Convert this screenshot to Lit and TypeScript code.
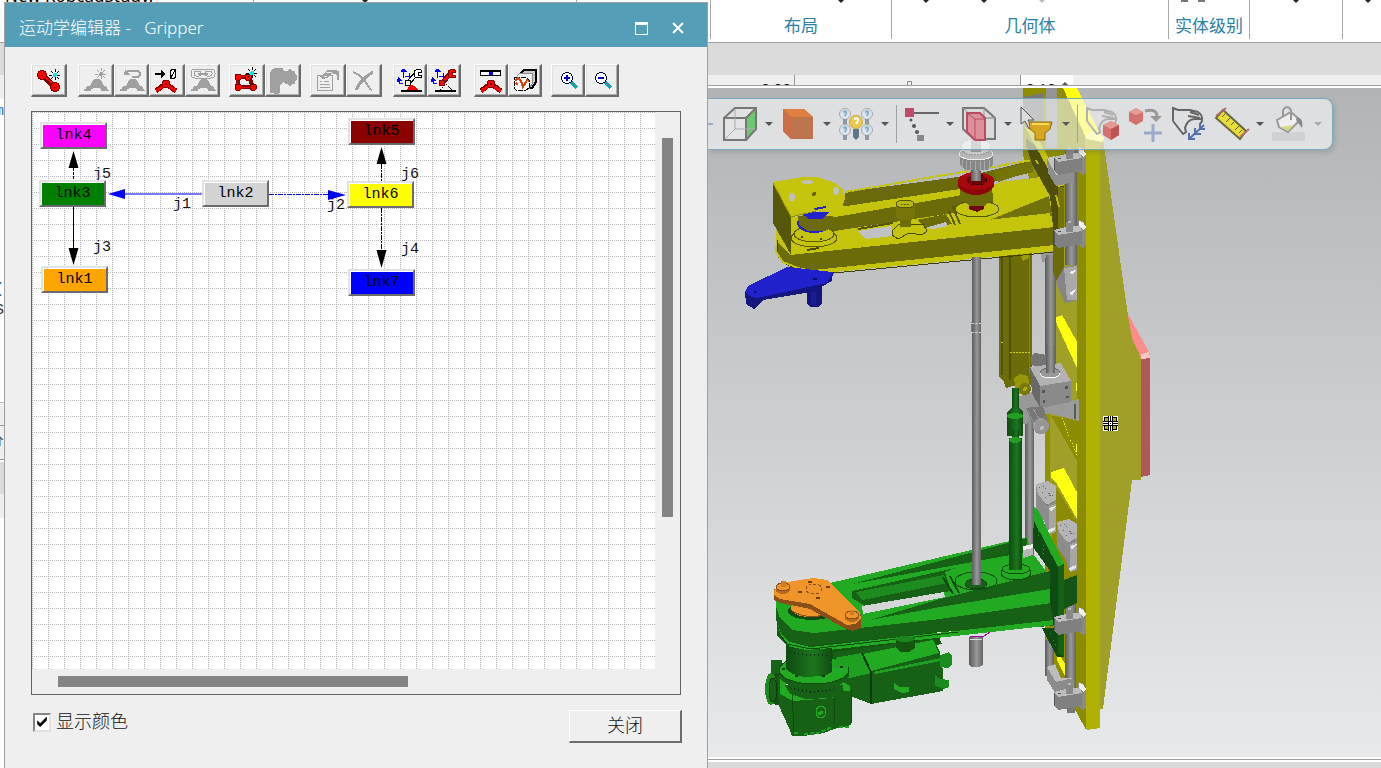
import { LitElement, html, css, svg } from "lit";
import { customElement, state } from "lit/decorators.js";

const star = (x: number, y: number, c: string, core: string) => svg`
  <path d="M${x} ${y - 6}v12M${x - 6} ${y}h12M${x - 4} ${y - 4}l8 8M${x + 4} ${y - 4}l-8 8" stroke=${c} stroke-dasharray="3 1" fill="none"/>
  <circle cx=${x} cy=${y} r="2" fill=${core}/>`;

const greyJoint = svg`<path d="M6 27v-2h2v-2l5-2 1-4 3-2h4l3 2 1 4 4 2v2l2 2h-8v-2l-3-1h-4l-3 1v2z" fill="#a0a0a0"/>`;
const redJoint = svg`
  <path d="M15 21L7 27M19 21l8 6" stroke="#7d0000" stroke-width="5"/>
  <path d="M15 22l-8 5M19 22l8 5" stroke="#f00" stroke-width="3"/>
  <circle cx="17" cy="20" r="4" fill="#f00" stroke="#7d0000"/><circle cx="17" cy="20" r="1" fill="#7d0000"/>`;
const axes = svg`<path d="M10 14V6M8 8l2-3 3 3M12 12h6M16 9v6M6 14v5h4" stroke="#00f" fill="none"/><path d="M7 8h7l-3-4zM5 13l4 4-5 1z" fill="#00f"/>`;

const toolIcons: Record<string, unknown> = {
  link: svg`<path d="M11 11L24 23" stroke="#7d0000" stroke-width="6"/><path d="M12 11l12 11" stroke="#f00" stroke-width="2"/>
    <circle cx="11" cy="11" r="4.500" fill="#f00" stroke="#7d0000"/><circle cx="24" cy="23" r="4.500" fill="#f00" stroke="#7d0000"/>
    <path d="M10 11h2M23 23h2" stroke="#7d0000"/>${star(24, 11, "#000", "#00e5e5")}`,
  joint: svg`${greyJoint}${star(23, 10, "#a0a0a0", "#a0a0a0")}`,
  reverse: svg`${greyJoint}<path d="M13 7h11l2 2v2l-2 2h-6" stroke="#a0a0a0" stroke-width="2" fill="none"/><path d="M10 11h7l-6-5z" fill="#a0a0a0"/>`,
  zero: svg`${redJoint}<path d="M6 10h10" stroke="#000" stroke-width="2" fill="none"/><path d="M12 6l5 4-5 4z"/><ellipse cx="24" cy="10" rx="3" ry="4.500" fill="none" stroke="#000"/><path d="M27 5l-6 10" stroke="#000"/>`,
  chain: svg`${greyJoint}<rect x="6" y="5" width="24" height="9" rx="4" fill="none" stroke="#a0a0a0"/><rect x="9" y="7" width="7" height="5" rx="2" fill="none" stroke="#a0a0a0"/><rect x="20" y="7" width="7" height="5" rx="2" fill="none" stroke="#a0a0a0"/><path d="M13 9.500h10" stroke="#a0a0a0" stroke-width="2"/>`,
  crank: svg`<path d="M9 13h11l4 10H9z" fill="none" stroke="#7d0000" stroke-width="4"/><path d="M9 12h11M8 13v10h16" fill="none" stroke="#f00"/>
    ${[[9, 13], [19, 13], [9, 23], [24, 23]].map(([x, y]) => svg`<rect x=${x - 3} y=${y - 3} width="6" height="6" rx="1" fill="#f00" stroke="#7d0000"/>`)}${star(23, 9, "#000", "#00e5e5")}`,
  frame: svg`<path d="M5 29V9l2-4 4-1h7l1 3h4l1-2h2l1 2h3v3l2 1v5l-2 1v3h-3l-1 2h-2l-1-2h-3l-2-2-3 3v8l-2 1z" fill="#a0a0a0"/>`,
  props: svg`<path d="M7 11h15v15H7zM10 17h2M10 20h10M10 23h10M14 17h5" fill="none" stroke="#a0a0a0"/><path d="M9 12l4-1 4-5h8l4 1v9h-2v-5l-5-2-5 5-4 1z" fill="#a0a0a0"/><path d="M16 8h6M14 12h3" stroke="#eee"/>`,
  remove: svg`<path d="M7 8l6 3 6 6 5 8 2 1" stroke="#a0a0a0" stroke-width="2" fill="none"/><path d="M27 8l-6 4-7 7-4 7" stroke="#a0a0a0" stroke-width="3" fill="none"/>`,
  pose: svg`${axes}<path d="M15 19l8-9" stroke="#000" stroke-width="5"/><path d="M15 19l8-9" stroke="#fff" stroke-width="3"/><path d="M21 7l4-2 3 1v2h-3v3h3v2h-6z" fill="#fff" stroke="#000"/><circle cx="15" cy="19" r="3" fill="#fff" stroke="#000"/><path d="M13 27l4-6 5 1 4 5z" fill="#f00"/><path d="M8 27h21" stroke="#000" stroke-width="2"/>`,
  tool: svg`${axes}<path d="M15 19l8-9" stroke="#7d0000" stroke-width="5"/><path d="M15 19l8-9" stroke="#f00" stroke-width="3"/><path d="M21 7l4-2 3 1v2h-3v3h3v2h-6z" fill="#f00" stroke="#7d0000"/><circle cx="15" cy="19" r="3" fill="#f00" stroke="#7d0000"/><path d="M13 27l3-5M19 20l7 7" stroke="#000" stroke-dasharray="2 1"/><path d="M8 27h21" stroke="#000" stroke-width="2"/>`,
  bar: svg`${redJoint}<rect x="6" y="6" width="21" height="6" fill="#000"/><rect x="7" y="8" width="19" height="3" fill="#fff"/><rect x="15" y="8" width="4" height="3" fill="#00f"/>`,
  cubes: svg`<path d="M12 10l4-4h12v12l-4 6-12 1z" fill="#c8c8c8" stroke="#000" stroke-width="2"/><path d="M9 12l3-3h12v11l-3 5" fill="#eee" stroke="#888"/><path d="M7 13h11l3 3v8l-3 2H8l-2-2v-9z" fill="#fff" stroke="#000" stroke-dasharray="5 1"/><path d="M7 17l3-3 3 3 2 6 4-7 2 1M8 19l2 2" stroke="#d8450a" stroke-width="2" fill="none"/>`,
  zoomin: svg`<path d="M20 18l6 6" stroke="#00aab4" stroke-width="3"/><path d="M21 18l5 5" stroke="#777"/><circle cx="16" cy="14" r="5.500" fill="#fff" stroke="#00003c"/><path d="M13 14h6M16 11v6" stroke="#0000c8" stroke-width="2"/>`,
  zoomout: svg`<path d="M20 18l6 6" stroke="#00aab4" stroke-width="3"/><path d="M21 18l5 5" stroke="#777"/><circle cx="16" cy="14" r="5.500" fill="#fff" stroke="#00003c"/><path d="M13 14h6" stroke="#0000c8" stroke-width="2"/>`,
};

type Tool = { id: string; name: string; off?: boolean };
const toolGroups: { cls: string; tools: Tool[] }[] = [
  { cls: "one", tools: [{ id: "link", name: "新建连杆" }] },
  { cls: "four wide", tools: [{ id: "joint", name: "新建关节", off: true }, { id: "reverse", name: "反转关节", off: true }, { id: "zero", name: "归零" }, { id: "chain", name: "关节依赖", off: true }] },
  { cls: "two", tools: [{ id: "crank", name: "曲柄" }, { id: "frame", name: "基准坐标系", off: true }] },
  { cls: "two", tools: [{ id: "props", name: "属性", off: true }, { id: "remove", name: "删除", off: true }] },
  { cls: "pair wide", tools: [{ id: "pose", name: "姿态" }, { id: "tool", name: "工具坐标系" }] },
  { cls: "pair wider", tools: [{ id: "bar", name: "关节调整" }, { id: "cubes", name: "姿态编辑器" }] },
  { cls: "pair", tools: [{ id: "zoomin", name: "放大" }, { id: "zoomout", name: "缩小" }] },
];

const nodes = [
  { id: "lnk4", x: 8, y: 10, c: "#ff00ff" },
  { id: "lnk3", x: 7, y: 68, c: "#008000" },
  { id: "lnk1", x: 9, y: 154, c: "#ffa500" },
  { id: "lnk2", x: 170, y: 68, c: "#d3d3d3" },
  { id: "lnk5", x: 316, y: 6, c: "#8b0000" },
  { id: "lnk6", x: 315, y: 69, c: "#ffff00" },
  { id: "lnk7", x: 316, y: 157, c: "#0000ff" },
];
const joints = [
  { id: "j5", x: 61, y: 66 }, { id: "j3", x: 61, y: 139 }, { id: "j1", x: 141, y: 96 },
  { id: "j2", x: 295, y: 97 }, { id: "j6", x: 369, y: 66 }, { id: "j4", x: 369, y: 141 },
];

const down = (xs: number[], c = "#222") => svg`${xs.map((x) => svg`<path d="M${x - 3} 0h6l-3 3z" fill=${c}/>`)}`;

/* Small drive housing with a row of fixing holes. */
const housing = (x: number, y: number) => svg`
  <path d="M${x} ${y}l8-1 12 4v44l-8 1-4-11-8-12z" fill="#8c8c8c"/>
  <path d="M${x + 13} ${y + 22}l7-2v28l-7 2z" fill="#a6a6a6"/>
  <path d="M${x} ${y}l12-3 8 5v14l-9 5-9-11z" fill="#b5b5b5"/>
  <path d="M${x + 3} ${y + 3}l8 13M${x + 7} ${y + 2}l8 10M${x + 13} ${y + 12}l5-1M${x + 11} ${y + 21}l8-4" stroke="#666" stroke-dasharray="1 2"/>
  <path d="M${x + 13} ${y + 24}l7-2-5 6zM${x + 12} ${y + 46}l7-3v3l-6 3z" fill="#e6e6e6"/>`;

const clamp = (x: number, y: number) => svg`
  <path d="M${x + 24} ${y - 6}l6 2 2 6v18l-3 2-5-4z" fill="#8a8a8a"/>
  <path d="M${x + 25} ${y - 5}l4 1 3 5-2 3-5-4z" fill="#f0f0f0"/>
  <path d="M${x} ${y + 5}l4 4 24-4v13l-24 4-4-4z" fill="#808080"/>
  <path d="M${x} ${y + 4}l12-3 14-1 2 5-24 4z" fill="#bdbdbd"/>
  <path d="M${x + 4} ${y + 5}h3M${x} ${y + 5}v12" stroke="#555"/>
  <rect x=${x + 12} y=${y - 4} width="7" height="10" fill="#888"/><rect x=${x + 14} y=${y - 5} width="3" height="2" fill="#b8b8b8"/>`;

const model = svg`
<defs>
  <linearGradient id="rod"><stop offset="0" stop-color="#5a5a5a"/><stop offset=".55" stop-color="#999"/><stop offset="1" stop-color="#626262"/></linearGradient>
  <linearGradient id="gcyl"><stop offset="0" stop-color="#0f4a12"/><stop offset=".6" stop-color="#1c761e"/><stop offset="1" stop-color="#104b12"/></linearGradient>
  <linearGradient id="ycyl"><stop offset="0" stop-color="#56560a"/><stop offset=".5" stop-color="#7d7d0c"/><stop offset="1" stop-color="#5d5d08"/></linearGradient>
</defs>
<!-- column -->
<path d="M1127 312l23 42-1 6-8-1-9-12z" fill="#ff8c8c"/>
<path d="M1141 356h9v119l-9 2z" fill="#b05858"/><path d="M1141 354l8-2 1 6-9 1z" fill="#ffc4c4"/>
<path d="M1130 334l11 24h-11z" fill="#ffff10"/>
<path d="M1023 88h40l23 49v590l-9-15-32-55V240l-22-85z" fill="#8e8e00"/>
<path d="M1045 240h10v410l-10-12z" fill="#929200"/>
<path d="M1050 247h30v350h-30z" fill="#a0a028"/>
<path d="M1081 160h5v400h-5z" fill="#8a8a00"/>
<path d="M1057 300l20 10 4 40-26-35z" fill="#a0a028"/>
<path d="M1051 416l30 52v-90l-8 40z" fill="#8c8c00"/>
<path d="M1054 318l8-3 19 34v28z" fill="#ffff10"/>
<path d="M1051 472l13-4 16 30 1 28-24-42-6-6z" fill="#ffff10"/>
<path d="M1052 480l27 45v120h-27z" fill="#8b8b05"/>
<path d="M1045 560h20v98l12 15v40l-12-18-20-34z" fill="#8e8e00"/><path d="M1057 650l8 14v12l-8-16z" fill="#ffff10"/>
<ellipse cx="1078" cy="387" rx="2" ry="6" fill="#ffff10"/><ellipse cx="1078" cy="448" rx="2" ry="6" fill="#ffff10"/>
<path d="M1062 418l19 48" stroke="#ff0" stroke-dasharray="1 2"/>
<path d="M1063 88h14l25 50h-16z" fill="#ffff10"/>
<path d="M1098 136l5 2 25 178 4 22 9 20v122h-9l-29 229h-5z" fill="#a0a028"/>
<path d="M1085 137h15v591l-13 2-1-3z" fill="#b0b005"/>
<path d="M1086 134l11-3 7 7-2 4-16-3z" fill="#ffff70"/>
<path d="M1077 170h9v560l-9-17z" fill="#8c8c00"/>
<!-- rails behind -->
<rect x="1046" y="88" width="11" height="60" fill="#949494"/><path d="M1023 97l20-4v35h-18z" fill="#777"/>
<rect x="1065" y="150" width="12" height="115" fill="url(#rod)"/>
<rect x="1025" y="420" width="9" height="135" fill="url(#rod)"/>
<rect x="1045" y="640" width="9" height="36" fill="url(#rod)"/>
<rect x="1065" y="600" width="11" height="100" fill="url(#rod)"/>
<!-- upper cylinder -->
<path d="M999 250h33v135h-15l-11 3-2-6-5-5z" fill="#6c6c08"/><path d="M1002 250v125M1010 250v130" stroke="#525206" stroke-width="2"/><path d="M1029 255v118" stroke="#858510"/>
<path d="M1010 352h20M1001 342h3" stroke="#d0d010" stroke-dasharray="2 1"/><path d="M1018 250l10-1 1 9-6 3z" fill="#9d9d0b"/>
<rect x="1045" y="247" width="11" height="130" fill="url(#rod)"/><path d="M1040 250h16v5h-10l-1 7h-3z" fill="#9a9a9a"/>
<!-- upper arm -->
<path d="M776 230v19l6 11 18 10 23 3 232-22v-8l-30-60z" fill="#c4c40a"/>
<path d="M830 202l145-20 10 20-155 22z" fill="#c4c40a"/>
<path d="M845 192l128-17 60-15v12l-60 15-130 20z" fill="#6a6a0a"/>
<path d="M845 192l188-32" stroke="#c4c40a" stroke-width="2" stroke-dasharray="6 1"/>
<path d="M840 207l200-30 16 28-1 24-265 27V218z" fill="#c4c40a"/>
<path d="M993 171l40-10v10l-35 11z" fill="#747408"/><path d="M1000 182l34-4 13 18-64 22z" fill="#c4c40a"/>
<path d="M977 225l72-29 3 20-90 11z" fill="#72720a"/><path d="M970 222l80-9 3 15-80 9z" fill="#c4c40a"/>
<path d="M824 219l144-25 25-1v14l-165 25z" fill="#6b6b0a"/>
<path d="M790 255l265-28v18l-242 25-21-4-14-8-1-16z" fill="#6b6b0a"/>
<path d="M777 240v13l7 10 19 9 20 2 232-22" fill="none" stroke="#3f3f05"/><path d="M776 246v6l7 10 20 8 20 2 232-23" fill="none" stroke="#c4c40a" stroke-width="2"/>
<path d="M858 231l33-5 2 10-28 3z" fill="#c0c1c3"/><path d="M917 220l29-6 6 10-27 4z" fill="#6b6b0a"/><path d="M925 228l21-6 2 4-15 3z" fill="#c0c1c3"/>
<path d="M858 229l35-6" stroke="#55550a" stroke-width="2"/>
<path d="M952 205l8 19M948 209l7 16" stroke="#5c5c08" stroke-width="2"/>
<ellipse cx="814" cy="238" rx="23" ry="9" fill="none" stroke="#5b5b08"/><ellipse cx="814" cy="234" rx="20" ry="8" fill="#c4c40a" stroke="#5b5b08"/>
<ellipse cx="814" cy="223" rx="17" ry="10" fill="#2222cc"/><path d="M798 216h35v11l-8 4h-17l-9-6z" fill="#6b6b0a"/><path d="M801 212h28l-6 7h-14z" fill="#2222cc"/>
<path d="M773 183l18 34v38l-18-32z" fill="#57570a"/>
<path d="M773 182l30-5 15 0 17 6 9 7 1 9-5 8-12 5-12-1-25 6z" fill="#c4c40a"/>
<path d="M773 183l18 34 25-6" stroke="#8c8c08" fill="none"/>
<ellipse cx="807" cy="182" rx="6" ry="2" fill="#c0c0b0"/><ellipse cx="792" cy="197" rx="3" ry="4" fill="#c0c0c0"/><ellipse cx="836" cy="191" rx="3" ry="4" fill="#c0c0c0"/><circle cx="814" cy="194" r="2" fill="#67670a"/><path d="M814 208l12-2v2l-11 2z" fill="#2222cc"/>
<path d="M801 237h2M820 239h2M807 250l12-2" stroke="#494906" stroke-width="2"/>
<path d="M892 231l7-7h24l4 7-5 4-13-2-11 6-6-4z" fill="#c4c40a" stroke="#4c4c06"/>
<path d="M900 208h11v19h-11z" fill="#6d6d0a"/><path d="M896 203h19v14l-4 3h-11l-4-3z" fill="#75750a"/><ellipse cx="905" cy="204" rx="9" ry="4" fill="#b9b90a" stroke="#555506"/><path d="M901 204h8" stroke="#5b5b06" stroke-dasharray="2 1"/>
<ellipse cx="977" cy="209" rx="22" ry="8" fill="#c4c40a" stroke="#55550a"/>
<path d="M969 200h15v9l-7 3-8-3z" fill="#6d0508"/><path d="M960 183h32v15l-8 8h-15l-9-9z" fill="#6b6b0a"/>
<ellipse cx="976" cy="184" rx="18" ry="11" fill="#8c060a"/><ellipse cx="976" cy="181" rx="18" ry="9" fill="#a6080e"/><ellipse cx="977" cy="180" rx="10" ry="5" fill="#6c0508" stroke="#3c0505" stroke-dasharray="3 2"/>
<rect x="971" y="138" width="10" height="43" fill="url(#rod)"/><path d="M960 155h33v10l-6 5h-21l-6-5z" fill="#888"/><path d="M962 160v8M966 161v9M970 161v10M975 161v10M980 161v10M984 161v9M989 160v8" stroke="#aaa"/><ellipse cx="976" cy="154" rx="17" ry="6" fill="#b9b9b9" stroke="#eee"/><ellipse cx="976" cy="147" rx="15" ry="8" fill="#d9d9d9" stroke="#999" stroke-dasharray="2 1"/><path d="M971 138h10v14h-10z" fill="#a4a4a4"/>
<path d="M1026 138l17 14 21 35v92l-6-2-5-16v-34l-3-31-17-30-7-20z" fill="#4e4e08"/><path d="M1025 127l8 3 31 55-6 2z" fill="#c4c40a"/><path d="M1058 187h6v92l-6-6z" fill="#73730a"/>
<path d="M1053 246h11v35l-8-1-3-8z" fill="#6b6b0a"/><path d="M1036 160l2 4M1056 195l3 12" stroke="#bcbc0a" stroke-width="2"/>
<!-- upper guide clamps -->
<path d="M1047 158l8-2 5 14 14 2v10l-18 4-8-13z" fill="#8f8f8f"/><path d="M1047 158l8-2 5 14 14 1-18 4z" fill="#c4c4c4"/>
${clamp(1054, 153)}${clamp(1054, 226)}
<path d="M1056 282l8-15 13-2v35l-12 3z" fill="#858585"/><path d="M1064 268l13-2v34h-10z" fill="#aaa"/><path d="M1069 272l7-2-4 5zM1069 293l7-4-4 7z" fill="#f4f4f4"/>
<!-- blue finger -->
<path d="M807 284h15v20l-4 3h-8l-3-3z" fill="#15157e"/><path d="M811 284h5v21h-5z" fill="#1c1c96"/>
<path d="M745 292l2-4 40-21 46 5-1 9-9 5-6 5-54 9-9 9-8-5z" fill="#15157e"/>
<path d="M745 292l3-6 39-19 46 5-6 11-70 15-8-2z" fill="#2222cc"/><path d="M754 292h2M813 279h4" stroke="#0d0d58" stroke-width="2"/>
<!-- centre rod -->
<rect x="972" y="257" width="9" height="330" fill="url(#rod)"/><rect x="971" y="322" width="10" height="11" fill="#828282"/><path d="M971 323h2M979 323h2M971 332h9" stroke="#e8e8e8" stroke-dasharray="3 1"/>
<!-- gearbox -->
<path d="M1031 356l4-3 12 2v14l-8 3-8-8z" fill="#747474"/>
<path d="M1014 398l19-6 7 13 15-7 24 5v18l-27-7-17 0-8 10h-8v-12z" fill="#989898"/>
<path d="M1042 409l37-10v22l-22-6z" fill="#9b9b9b"/><path d="M1075 404v15" stroke="#5a5a5a" stroke-width="2"/>
<path d="M1030 367l31-4 10 19v20l-31 6-7-15z" fill="#8a8a8a"/><path d="M1030 367l31-4 10 18-31 5z" fill="#b3b3b3"/><path d="M1030 367l10 19v22l-8-15z" fill="#696969"/>
<path d="M1042 390h3v3h-3zM1065 386h3v3h-3zM1043 400h2v3h-2zM1066 396h3v2h-3z" fill="#555"/>
<ellipse cx="1050" cy="373" rx="10" ry="5" fill="#999" stroke="#666"/><path d="M1040 373a10 5 0 0 0 20 0" stroke="#fff" fill="none"/><rect x="1046" y="345" width="9" height="28" fill="url(#rod)"/>
<path d="M1026 408l17-2 6 19-13 8z" fill="#777"/><ellipse cx="1041" cy="426" rx="8" ry="8" fill="#969696"/><circle cx="1042" cy="428" r="2" fill="#bbb"/>
<path d="M1028 411l8 16M1033 409l8 12" stroke="#aaa" stroke-dasharray="1 1"/>
<path d="M1014 378l6-4 8 2 3 15-7 4-8-2z" fill="#96960a"/><ellipse cx="1025" cy="389" rx="6" ry="6" fill="#77770a"/><circle cx="1025" cy="389" r="2" fill="#adad10"/>
<!-- green cylinder -->
<rect x="1012" y="388" width="7" height="25" fill="url(#gcyl)"/><path d="M1008 411l4-3h7l4 3v25h-16v-22z" fill="url(#gcyl)"/><ellipse cx="1015" cy="416" rx="8" ry="3" fill="#239f25"/><rect x="1012" y="430" width="7" height="12" fill="url(#gcyl)"/>
<!-- drive housings -->
${housing(1036, 484)}${housing(1057, 522)}
<!-- lower arm -->
<path d="M776 600l6-12 48-5 20 18-18 40h-40l-15-7z" fill="#22aa22"/>
<path d="M830 583l197-46 4 14 26 35-5 30-214 22-50-5-11-8v-18z" fill="#22aa22"/>
<path d="M852 584l175-46v14l-175 32z" fill="#176117"/><path d="M852 598l0-7 103-23-10 4 6 19-86 15z" fill="#176117"/><path d="M856 592l88-17 3 8-85 17z" fill="#1d8b1f"/>
<path d="M862 606l82-14 1 5-82 17z" fill="#d5d6d8"/><path d="M943 577l10 17M950 576l9 17" stroke="#0f4a12" stroke-width="2"/>
<path d="M870 620l70-21 110-28v18l-110 18-70 13z" fill="#176117"/>
<path d="M786 642l100-8 50-4 6 14-110 16-46 2z" fill="#14560f"/>
<path d="M776 606l4 12 12 12 22 3 126-14 118-17v18l-5 6-113 6-131 14-23-2-9-8z" fill="#176117"/>
<path d="M777 621l4 13 9 8 20 5 245-27v5l-245 27-20-5-9-10z" fill="#22aa22"/><path d="M778 632l9 12 24 5 147-17" stroke="#104b12" fill="none"/>
<ellipse cx="976" cy="581" rx="21" ry="9" fill="none" stroke="#12500f"/><ellipse cx="976" cy="584" rx="11" ry="5" fill="#176117" stroke="#0b390d" stroke-dasharray="3 1"/><rect x="972" y="555" width="9" height="30" fill="#888"/><rect x="972" y="257" width="9" height="328" fill="url(#rod)"/><path d="M971 323h10M971 332h10" stroke="#ccc" stroke-dasharray="3 1"/>
<ellipse cx="1016" cy="573" rx="15" ry="7" fill="#22aa22" stroke="#104b12"/><ellipse cx="1016" cy="569" rx="14" ry="5" fill="#22aa22" stroke="#104b12"/><rect x="1009" y="438" width="13" height="132" fill="url(#gcyl)"/><ellipse cx="1015" cy="440" rx="6" ry="3" fill="#239f25"/>
<path d="M1023 546l10-2v11l-10 3z" fill="#b5b5b5"/><path d="M1023 546l10-2v4l-10 2z" fill="#f0f0f0"/>
<path d="M1034 509l30 56v92h-7l-15-29h12l-4-28v-29l-17-24z" fill="#0f4a12"/><path d="M1034 507l4 3 26 54-6 3-25-48z" fill="#22aa22"/><path d="M1058 566h6v91l-6-4z" fill="#176117"/><path d="M1064 580l13-5v28l-13 6z" fill="#145414"/>
<path d="M1038 527v12M1043 545v12M1050 633l8 17" stroke="#22aa22" stroke-dasharray="1 3"/>
<path d="M969 637h14v28l-4 2h-7l-3-2z" fill="url(#rod)"/><path d="M970 636h14l6-4" stroke="#a000a0" fill="none"/><path d="M970 639h12" stroke="#ddd"/>
<!-- lower drive -->
<path d="M834 652l90-12 10-1 6 13 3 19v20l-72 13-18-7-23-1z" fill="#176117"/><path d="M862 654l71-14 6 13-68 18z" fill="#22aa22"/><path d="M834 658l28-5 9 20-34 8z" fill="#1fa020"/><path d="M862 653l9 19v32" stroke="#0c3b0e" stroke-width="2" fill="none"/><path d="M873 672l68-14v3l-66 13z" fill="#1fa020"/>
<path d="M940 655l9-3 3 4v8l-4 4-8-1z" fill="#1a8b1c"/><path d="M935 675l5 4 9 1v7l-5 2-9-3z" fill="#1a8b1c"/><path d="M894 683l6 4h9v5l-7 1-8-4z" fill="#22aa22"/><path d="M896 639h19v9l-6 4h-8l-5-4z" fill="#14560f"/><ellipse cx="905" cy="639" rx="10" ry="3" fill="#1b861d"/>
<path d="M771 660h11v15h-11z" fill="#17631a"/><ellipse cx="777" cy="689" rx="8" ry="16" fill="#145014"/><ellipse cx="771" cy="689" rx="6" ry="16" fill="#1c8a1e"/><ellipse cx="773" cy="690" rx="4" ry="12" fill="#176117" stroke="#0c3b0e"/>
<path d="M777 675l15 17 59-9v42l-17 4-10 4-20 3-12 0-3-8-10-22z" fill="#176117"/><path d="M780 676l15 20 39-2 6-14 10 6v5l-12-1-5 8-40 3-13-7z" fill="#22aa22"/>
<path d="M792 690l2 43M851 690v33M834 698v25" stroke="#0f4a12"/><ellipse cx="821" cy="712" rx="5" ry="6" fill="#176117" stroke="#22aa22"/><path d="M818 714l5-2" stroke="#22aa22" stroke-width="3"/><path d="M794 733h4M804 734l14-1 14-6M839 727h10" stroke="#1fa020" stroke-width="2" stroke-dasharray="4 2" fill="none"/>
<path d="M785 685h58v8l-12 5-25 1-16-5z" fill="#176117"/><ellipse cx="814" cy="675" rx="35" ry="14" fill="#176117"/><ellipse cx="814" cy="670" rx="35" ry="14" fill="#22aa22" stroke="#104b12"/>
<path d="M786 646l20 4 26-2v24l-8 4-20 1-11-3-7-5z" fill="url(#gcyl)"/><path d="M790 652l16 3h22M790 688l20 4 24-2" stroke="#0b360d" stroke-dasharray="1 3" stroke-width="2" fill="none"/><path d="M831 662l8-4 23-3-16 13h-12z" fill="#1fa020"/>
<path d="M782 669h3M795 676h3M822 676h3M840 667h3" stroke="#0c3b0e" stroke-width="2"/>
<!-- orange finger -->
<ellipse cx="812" cy="611" rx="24" ry="9" fill="#0f4a12"/><ellipse cx="810" cy="608" rx="19" ry="9" fill="#f0952a"/><path d="M792 611q17 10 38 2" stroke="#8a4f18" fill="none"/>
<path d="M774 589v11l6 3 30 6 36 20 7 2 8-3v-13l-6-6z" fill="#8a4f18"/><path d="M774 590l7-7 32-5 14 2 33 32 1 7-6 5-8 1-37-21-30-5-6-4z" fill="#f0952a"/>
<ellipse cx="814" cy="589" rx="8" ry="5" fill="none" stroke="#8a4f18" stroke-dasharray="3 2"/><path d="M808 582h4M826 587h4M798 592h4M816 598h4" stroke="#6d3c10" stroke-width="2"/>
<ellipse cx="783" cy="590" rx="7" ry="4" fill="#b66a1c"/><ellipse cx="783" cy="587" rx="7" ry="4" fill="#f0952a" stroke="#8a4f18"/><rect x="781" y="581" width="5" height="6" fill="#ce7d20"/>
<ellipse cx="852" cy="618" rx="7" ry="4" fill="#b66a1c"/><ellipse cx="852" cy="615" rx="7" ry="4" fill="#f0952a" stroke="#8a4f18"/><rect x="850" y="610" width="4" height="5" fill="#ce7d20"/>
<!-- lower guide clamps -->
<path d="M1047 668l8-3 5 14 14 1v10l-18 4-9-14z" fill="#8b8b8b"/><path d="M1047 667l8-3 6 14 13 0-18 4z" fill="#bcbcbc"/>
${clamp(1054, 613)}${clamp(1054, 688)}<rect x="1067" y="708" width="8" height="5" fill="#777"/>
<!-- pick cursor -->
<path d="M1103 416h15v15h-15z" fill="#fff"/><path d="M1104 417h13v13h-13z"/><path d="M1105 418h11v11h-11z" fill="#a8a82a"/>
<path d="M1108 416h5v15h-5zM1103 421h15v5h-15z"/><path d="M1109 416h3v15h-3zM1103 422h15v3h-15z" fill="#fff"/><path d="M1110 416h1v15h-1zM1103 423h15v1h-15z"/><path d="M1108 421h5v5h-5z"/><path d="M1109 422h3v3h-3z" fill="#fff"/><path d="M1110 423h1v1h-1z"/>`;

const hand = (c: string) => svg`<path d="M3 16V3l5 2h12l8 2q5 3 4 9l-2 3M3 16l10 13 3-2-1-4q2-8 9-9h8M20 7l9 3M18 11l12 2" fill="none" stroke=${c} stroke-width="2"/>`;

const viewIcons: Record<string, unknown> = {
  wire: svg`<path d="M4 13l11-10h21v21l-10 11H4z" fill="#e8e8e8" fill-opacity=".5"/><path d="M26 13L36 4v20L26 34z" fill="#6cc870"/><path d="M4 13h22v22H4zM4 13L15 3h21v21L26 35M26 13L36 3" fill="none" stroke="#777" stroke-width="2"/><path d="M15 4v20h20M15 24L5 34" stroke="#aaa" fill="none"/>`,
  solid: svg`<path d="M5 4h21l9 8v22H13L5 26z" fill="#bd7550"/><path d="M5 4h21l9 8H13z" fill="#e07f42"/><path d="M5 4l8 8v22l-8-8z" fill="#cf6c48"/>`,
  bulbs: svg`${[[9, 9], [31, 9], [9, 25], [31, 25]].map(([x, y]) => svg`<circle cx=${x} cy=${y} r="5.500" fill="#dde3e8" stroke="#aaa"/><path d="M${x - 2} ${y - 2}q4-2 3 1l-1 3" stroke="#7fb0cc" fill="none" stroke-width="2"/><path d="M${x - 2} ${y + 5}h4v5h-4z" fill="#8d9aa5"/>`)}<circle cx="20" cy="17" r="6.500" fill="#edc94b" stroke="#c7a743"/><path d="M18 14q5-2 4 2l-2 3" stroke="#fff" fill="none" stroke-width="2"/><path d="M17 24h6v8l-3 3-3-3z" fill="#5d7689"/>`,
  path: svg`<rect x="4" y="3" width="9" height="9" fill="#c04b68"/><path d="M13 8h25" stroke="#666" stroke-width="2"/><g fill="#555"><circle cx="10" cy="15" r="1.500"/><circle cx="13" cy="21" r="2"/><circle cx="16" cy="27" r="2"/><rect x="16" y="30" width="7" height="6" fill="#888"/></g>`,
  section: svg`<path d="M4 3h21l11 10v21H15L4 24z" fill="#dadada" stroke="#777" stroke-width="2"/><path d="M25 3v10h11M15 13v21M4 3l11 10h21" fill="none" stroke="#999"/><path d="M8 8h13l5 5v22H16l-8-8z" fill="#dd909a" stroke="#b84c62" stroke-width="2"/><path d="M8 8l8 6h10M16 14v20" stroke="#b84c62" fill="none"/>`,
  filter: svg`<path d="M4 2v17l4-3 4 8 3-2-4-7h6z" fill="#ddd" stroke="#555"/><path d="M12 17h23l-2 7-5 4v7H18v-7l-5-4z" fill="#d9a622" stroke="#87700a"/><path d="M15 19h17" stroke="#f9d65c" stroke-width="2"/>`,
  handcube: svg`${hand("#b0b0b0")}<path d="M19 20l8-4 8 4v10l-8 5-8-5z" fill="#d5706c"/><path d="M19 20l8-4 8 4-8 4z" fill="#e49a94"/><path d="M27 24l8-4v10l-8 5z" fill="#c25353"/>`,
  move: svg`<path d="M2 7l7-4 7 4v9l-7 4-7-4z" fill="#d2716e"/><path d="M2 7l7-4 7 4-7 3z" fill="#e59e98"/><path d="M18 6q13-3 12 7" fill="none" stroke="#999" stroke-width="3"/><path d="M23 11h12l-6 6z" fill="#999"/><path d="M17 28h18M26 19v18" stroke="#9daaca" stroke-width="3"/>`,
  handaxis: svg`${hand("#666")}<path d="M19 34L34 20M19 28v6h6M25 23v6h6M30 18v6h5" stroke="#5470aa" stroke-width="2" fill="none"/>`,
  ruler: svg`<path d="M5 13l7-8 23 21-6 8z" fill="#e8df33" stroke="#6a6a40" stroke-width="2"/><path d="M14 9l-3 3M19 13l-4 4M23 17l-3 3M28 21l-4 4M31 25l-3 3" stroke="#55553a"/><path d="M5 11L15 3M29 32l9-8" stroke="#b36d6d" stroke-width="2"/>`,
  bucket: svg`<path d="M3 27h33v9H3z" fill="#cfd1d2"/><path d="M8 15l14-8 9 8-12 12-9-5z" fill="#eee" stroke="#999" stroke-width="2"/><path d="M14 12V5q4-6 8 0v10" fill="none" stroke="#999" stroke-width="2"/><path d="M28 12q7 2 5 11l-6-8" fill="#888"/><path d="M11 22l8 4 6-6z" fill="#d7d78a"/>`,
};
type ViewTool = { id: string; name: string; menu?: boolean };
const viewGroups: ViewTool[][] = [
  [{ id: "wire", name: "视图方向", menu: true }, { id: "solid", name: "显示样式", menu: true }, { id: "bulbs", name: "显示隐藏", menu: true }],
  [{ id: "path", name: "路径", menu: true }, { id: "section", name: "剖切", menu: true }, { id: "filter", name: "选择过滤", menu: true }],
  [{ id: "handcube", name: "放置" }, { id: "move", name: "重定位" }, { id: "handaxis", name: "操控" }, { id: "ruler", name: "测量", menu: true }, { id: "bucket", name: "颜色", menu: true }],
];

@customElement("view-toolbar")
export class ViewToolbar extends LitElement {
  static styles = css`
    :host { display: block; }
    .bar { display: flex; align-items: center; height: 52px; padding: 0 5px 0 0; width: max-content; box-sizing: border-box;
      background: rgba(250, 251, 253, 0.6); border: 1px solid #79a9bd; border-left: 0; border-radius: 0 9px 9px 0; box-shadow: 2px 3px 4px rgba(80, 80, 80, 0.2); }
    .grip { width: 5px; height: 2px; margin-right: 7px; background: #9daaca; }
    .group { display: flex; align-items: center; }
    .group + .group { margin-left: 2px; border-left: 1px solid #a3a3a3; padding-left: 4px; }
    button { border: 0; background: none; padding: 0; height: 38px; display: block; }
    .icon { width: 40px; }
    .plain { width: 43px; }
    .menu { width: 18px; }
    svg { display: block; margin: auto; }
  `;
  render() {
    return html`<div class="bar" role="toolbar"><div class="grip"></div>${viewGroups.map((g) => html`<div class="group">${g.map((t) => html`
      <button class=${t.menu ? "icon" : "plain"} aria-label=${t.name}><svg width="40" height="38" viewBox="0 0 40 38">${viewIcons[t.id]}</svg></button>
      ${t.menu ? html`<button class="menu" aria-label="${t.name}菜单"><svg width="8" height="5" viewBox="0 0 8 5"><path d="M0 0h8L4 4z" fill=${t.id === "bucket" ? "#aaa" : "#555"}/></svg></button>` : ""}`)}</div>`)}</div>`;
  }
}

@customElement("kinematics-editor")
export class KinematicsEditor extends LitElement {
  @state() private colours = true;

  static styles = css`
    :host { display: flex; flex-direction: column; box-sizing: border-box; border: 1px solid #a0a0a0; border-bottom: 0; background: #efefef; font-family: "Liberation Serif", "Noto Sans CJK SC", serif; }
    button { font: inherit; color: inherit; padding: 0; }
    .title { display: flex; align-items: center; height: 44px; padding: 6px 14px 0 14px; box-sizing: border-box; background: #559eb8; color: #fff; font: 17px/24px "Noto Sans", "Noto Sans CJK SC", sans-serif; }
    h1 { flex: 1; margin: 0; font: inherit; font-weight: 300; white-space: pre; }
    .caption { width: 30px; height: 30px; margin-left: 7px; border: 0; background: none; }
    .caption svg { display: block; margin: auto; }
    .tools { display: flex; gap: 9px; padding: 17px 26px 14px; }
    .set { display: flex; height: 33px; }
    .wide { margin-left: 2px; }
    .wider { margin-left: 4px; }
    .one { width: 36px; } .four { width: 142px; } .two { width: 72px; } .pair { width: 68px; }
    .tool { flex: 1; min-width: 0; box-sizing: border-box; background: #efefef; border: 1px solid #fff; border-right: 2px solid #6b6b6b; border-bottom: 2px solid #6b6b6b; box-shadow: inset 1px 1px #e0e0e0, inset -1px -1px #b0b0b0; overflow: hidden; }
    .tool svg { display: block; margin: -1px 0 0 -1px; }
    .frame { margin: 0 26px; border: 1px solid #646464; display: grid; grid-template-columns: 1fr 25px; grid-template-rows: 557px 25px; }
    .canvas { position: relative; overflow: hidden; background: #fff; }
    .canvas svg { display: block; position: absolute; }
    .node { position: absolute; width: 67px; height: 27px; box-sizing: border-box; border: 2px solid #e3e3e3; border-right-color: #6b6b6b; border-bottom-color: #6b6b6b; box-shadow: inset 1px 1px #fff; font: 15px/20px "Liberation Mono", monospace; color: #000; }
    .joint { font: 15px "Liberation Mono", monospace; fill: #111; }
    .vtrack { padding: 26px 7px 0; }
    .vthumb { height: 379px; background: #848484; }
    .htrack { padding: 7px 26px 0; }
    .hthumb { width: 350px; height: 11px; background: #848484; }
    .foot { display: flex; justify-content: space-between; align-items: flex-start; padding: 15px 25px 0 28px; font-size: 18px; font-weight: 300; color: #111; }
    label { display: flex; align-items: center; gap: 5px; line-height: 24px; }
    input { appearance: none; width: 18px; height: 19px; margin: 0; background: #fff; border: 2px solid #848484; border-right-color: #e2e2e2; border-bottom-color: #e2e2e2; display: grid; place-items: center; }
    input:checked::before { content: ""; width: 12px; height: 12px; background: #000; clip-path: polygon(10% 35%, 35% 60%, 90% 5%, 90% 38%, 35% 92%, 10% 68%); }
    .close { width: 113px; height: 33px; background: #efefef; border: 1px solid #fff; border-right: 2px solid #6b6b6b; border-bottom: 2px solid #6b6b6b; line-height: 26px; }
  `;

  render() {
    return html`
      <header class="title">
        <h1>运动学编辑器 -   Gripper</h1>
        <button class="caption" aria-label="最大化"><svg width="13" height="13"><path d="M.5 .5h12v12H.5z" fill="none" stroke="#fff"/><path d="M0 0h13v3H0z" fill="#fff"/></svg></button>
        <button class="caption" aria-label="关闭窗口"><svg width="12" height="12"><path d="M1 1l10 10M11 1L1 11" stroke="#fff" stroke-width="2"/></svg></button>
      </header>
      <div class="tools" role="toolbar">${toolGroups.map((g) => html`<div class="set ${g.cls}">${g.tools.map((t) => html`
        <button class="tool" aria-label=${t.name} ?disabled=${!!t.off}><svg width="36" height="33" viewBox="0 0 36 33" shape-rendering="crispEdges">${toolIcons[t.id]}</svg></button>`)}</div>`)}
      </div>
      <div class="frame">
        <div class="canvas">
          <svg width="100%" height="100%">
            <defs><pattern id="grid" width="16" height="16" patternUnits="userSpaceOnUse"><path d="M0 .5h16M.5 0v16" stroke="#b4b4b4" stroke-dasharray="1 1" shape-rendering="crispEdges"/></pattern></defs>
            <rect width="100%" height="100%" fill="url(#grid)"/>
            <path d="M41.500 56v12" stroke="#000" stroke-dasharray="3 1"/><path d="M41.500 39l5 17h-10z"/>
            <path d="M41.500 95v42" stroke="#000"/><path d="M41.500 153l5-17h-10z"/>
            <path d="M93 82h77" stroke="#7878ff" stroke-width="2"/><path d="M76 82l17-5v10z" fill="#00f"/>
            <path d="M237 82.500h59" stroke="#00f" stroke-dasharray="5 1 2 1"/><path d="M314 83l-18-5v10z" fill="#00f"/>
            <path d="M349.500 52v17" stroke="#000" stroke-dasharray="5 1 2 1"/><path d="M349.500 35l5 17h-10z"/>
            <path d="M349.500 96v42" stroke="#000" stroke-dasharray="5 1 2 1"/><path d="M349.500 156l5-18h-10z"/>
            ${joints.map((j) => svg`<text class="joint" x=${j.x} y=${j.y}>${j.id}</text>`)}
          </svg>
          ${nodes.map((n) => html`<button class="node" style="left:${n.x}px;top:${n.y}px;background:${this.colours ? n.c : "#d3d3d3"}">${n.id}</button>`)}
        </div>
        <div class="vtrack"><div class="vthumb"></div></div>
        <div class="htrack"><div class="hthumb"></div></div>
      </div>
      <footer class="foot">
        <label><input type="checkbox" .checked=${this.colours} @change=${(e: Event) => (this.colours = (e.target as HTMLInputElement).checked)}>显示颜色</label>
        <button class="close">关闭</button>
      </footer>`;
  }
}

@customElement("app-root")
export class AppRoot extends LitElement {
  static styles = css`
    :host { display: flex; flex-direction: column; position: relative; height: 100vh; min-height: 768px; overflow: hidden; background: #fff; font: 17px/24px "Noto Sans", "Noto Sans CJK SC", sans-serif; }
    .ribbon { display: flex; height: 42px; border-bottom: 1px solid #a0a0a0; }
    .group { box-sizing: border-box; height: 39px; border-right: 1px solid #a8a8a8; flex: none; color: #2b80a6; text-align: center; overflow: hidden; }
    .group svg { display: block; width: 100%; height: 4px; margin-bottom: 10px; }
    .g1 { width: 254px; } .g2 { width: 323px; } .g3 { width: 134px; } .g4 { width: 181px; } .g5 { width: 277px; } .g6 { width: 81px; } .g7 { width: 93px; }
    .g8 { flex: 1; border: 0; }
    .study { color: #000; text-align: left; padding-left: 5px; }
    .study span { display: block; margin-top: -14px; line-height: 20px; }
    .band { height: 32px; background: #dbdbdb; }
    .main { display: flex; flex: 1; min-height: 0; }
    .side { width: 708px; flex: none; overflow: hidden; font: 15px/20px "Liberation Mono", monospace; color: #333; }
    .side p { margin: 0; height: 21px; overflow: hidden; width: 4px; display: flex; justify-content: flex-end; }
    .side .blue { color: #2c6fb5; }
    .lead { height: 24px; background: #efefef; }
    .gap1 { height: 3px; } .gap2 { height: 157px; } .gap3 { height: 80px; }
    .pane { height: 22px; background: #efefef; border-top: 1px solid #bbb; }
    .pane2 { height: 33px; background: #efefef; border: solid #999; border-width: 1px 0; }
    .side .pane2 p { height: 33px; line-height: 32px; }
    .pane3 { height: 32px; margin-top: 2px; background: #dbdbdb; }
    .work { flex: 1; display: flex; flex-direction: column; min-width: 0; }
    .scale { display: flex; height: 10px; background: #efefef; border-bottom: 1px solid #a0a0a0; overflow: hidden; font-size: 15px; line-height: 20px; color: #000; }
    .scale span { box-sizing: border-box; padding-top: 3px; text-align: right; border-right: 1px solid #999; }
    .s1 { width: 87px; padding-right: 3px; }
    .s2 { width: 226px; }
    .s2 svg { display: block; margin: 3px 101px 0 auto; width: 20px; height: 4px; }
    .scale .s3 { width: 52px; background: #fff; border: 0; padding-left: 5px; display: flex; gap: 6px; }
    .s3 svg { margin-top: 4px; width: 6px; height: 4px; }
    .view { position: relative; flex: 1; margin: 2px 0; overflow: hidden; background: linear-gradient(#b2b3b5, #e8e9eb); }
    .view > svg { display: block; width: 673px; height: 671px; }
    view-toolbar { position: absolute; left: 0; top: 10px; }
    .status { height: 8px; border-top: 1px solid #a0a0a0; box-shadow: inset 0 2px #fff; background: #dadada; }
    kinematics-editor { position: absolute; left: 4px; top: 2px; bottom: 0; width: 704px; }
  `;

  render() {
    return html`
      <div class="ribbon">
        <div class="group g1 study"><span>New RobcadStudy,</span></div>
        <div class="group g2"><svg>${down([111])}</svg></div>
        <div class="group g3"></div>
        <div class="group g4"><svg>${down([130])}</svg>布局</div>
        <div class="group g5"><svg>${down([34, 92])}${down([150], "#bbb")}</svg>几何体</div>
        <div class="group g6"><svg><path d="M13 0v1h6M35 0v1h-6" stroke="#777" stroke-width="2" fill="none"/></svg>实体级别</div>
        <div class="group g7"><svg>${down([46])}</svg></div>
        <div class="group g8"><svg>${down([25])}</svg></div>
      </div>
      <div class="band"></div>
      <div class="main">
        <aside class="side">
          <div class="lead"></div><div class="gap1"></div><p class="blue">m</p>
          <div class="gap2"></div><p>(</p><p>S</p>
          <div class="gap3"></div><div class="pane"></div><div class="pane2"><p>分</p></div><div class="pane3"></div><div class="lead"></div>
        </aside>
        <main class="work">
          <div class="scale"><span class="s1">0.00</span><span class="s2"><svg><path d="M8.500 4V.500h4V4" stroke="#888" fill="none"/></svg></span><span class="s3">0.10<svg><path d="M0 3h6L3 0z" fill="#555"/></svg></span></div>
          <div class="view">
            <svg viewBox="708 88 673 671" shape-rendering="crispEdges" role="img" aria-label="Gripper">${model}</svg>
            <view-toolbar></view-toolbar>
          </div>
          <div class="status"></div>
        </main>
      </div>
      <kinematics-editor></kinematics-editor>`;
  }
}
